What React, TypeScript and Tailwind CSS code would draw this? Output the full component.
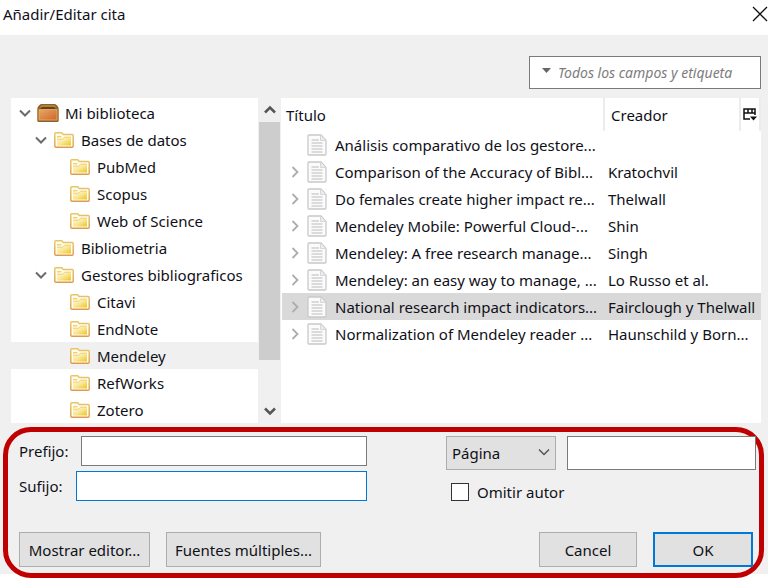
import { useState } from "react";

type Node = { label: string; depth: number; open?: boolean; root?: boolean };

const tree: Node[] = [
  { label: "Mi biblioteca", depth: 0, open: true, root: true },
  { label: "Bases de datos", depth: 1, open: true },
  { label: "PubMed", depth: 2 },
  { label: "Scopus", depth: 2 },
  { label: "Web of Science", depth: 2 },
  { label: "Bibliometria", depth: 1 },
  { label: "Gestores bibliograficos", depth: 1, open: true },
  { label: "Citavi", depth: 2 },
  { label: "EndNote", depth: 2 },
  { label: "Mendeley", depth: 2 },
  { label: "RefWorks", depth: 2 },
  { label: "Zotero", depth: 2 },
];

const items = [
  { title: "Análisis comparativo de los gestore...", creator: "", leaf: true },
  { title: "Comparison of the Accuracy of Bibl...", creator: "Kratochvil" },
  { title: "Do females create higher impact re...", creator: "Thelwall" },
  { title: "Mendeley Mobile: Powerful Cloud-...", creator: "Shin" },
  { title: "Mendeley: A free research manage...", creator: "Singh" },
  { title: "Mendeley: an easy way to manage, ...", creator: "Lo Russo et al." },
  { title: "National research impact indicators...", creator: "Fairclough y Thelwall" },
  { title: "Normalization of Mendeley reader ...", creator: "Haunschild y Born..." },
];

const indents = ["pl-2", "pl-6", "pl-10"];

function Chevron({ className }: { className: string }) {
  return (
    <svg viewBox="0 0 12 12" className={className} fill="none" stroke="currentColor" aria-hidden="true">
      <path d="M1 3.5 6 8.5 11 3.5" />
    </svg>
  );
}

function LibraryIcon() {
  return (
    <svg width="22" height="18" viewBox="0 0 22 18" className="shrink-0" aria-hidden="true">
      <defs>
        <linearGradient id="box" x1="0" y1="0" x2="1" y2="1">
          <stop offset="0" stopColor="#e9a863" />
          <stop offset="1" stopColor="#cd652f" />
        </linearGradient>
      </defs>
      <path d="M4 0h14q3.500 2 3.700 5v11.500q0 1.500-1.500 1.500H1.800Q.3 18 .3 16.500V5Q.5 2 4 0Z" fill="#8f602a" />
      <path d="M4.500 1h13l2 3h-17Z" fill="#b07f3f" />
      <path d="M5 3h12l2 2H3Z" fill="#684016" />
      <rect x="2" y="5.600" width="18" height="10.400" fill="url(#box)" stroke="#eeb16d" strokeWidth=".8" />
    </svg>
  );
}

function FolderIcon() {
  return (
    <svg width="20" height="16" viewBox="0 0 20 16" className="shrink-0" aria-hidden="true">
      <defs>
        <linearGradient id="folder" x1="0" y1="0" x2="1" y2="1">
          <stop offset="0" stopColor="#fffbe2" />
          <stop offset=".5" stopColor="#f8e795" />
          <stop offset="1" stopColor="#edc51f" />
        </linearGradient>
        <linearGradient id="edge" x1="0" y1="0" x2="0" y2="1">
          <stop offset="0" stopColor="#e8c668" />
          <stop offset="1" stopColor="#df9a4c" />
        </linearGradient>
      </defs>
      <path d="M.8 14V1.800Q.8.8 1.800.8h6l1.400 1.700h9q1 0 1 1V14q0 1.200-1 1.200H1.800Q.8 15.200.8 14Z" fill="#fffdf0" stroke="url(#edge)" strokeWidth="1.400" />
      <path d="M3 13.500V7.500h5.500l2-2H17v8Z" fill="url(#folder)" />
      <path d="M3 4h4.500v1.500H3Z" fill="#f0d46e" />
      <path d="M3 7.200h5.500l2-2H17" fill="none" stroke="#efcc69" />
    </svg>
  );
}

function PageIcon() {
  return (
    <svg width="20" height="22" viewBox="0 0 20 22" className="shrink-0" aria-hidden="true">
      <path d="M2 1h12l5 5.500V20q0 1-1 1H2q-1 0-1-1V2q0-1 1-1Z" fill="#fbfbfb" stroke="#c9c9c9" strokeWidth="1.300" />
      <path d="M13.500 1.200v5.300h5.200" fill="#ededed" stroke="#d6d6d6" />
      <path d="M4.500 6H12M4.500 9H15.500M4.500 12H15.500M4.500 15H15.500M4.500 18H15.500" stroke="#bcbcbc" strokeWidth="1.100" />
    </svg>
  );
}

export default function App() {
  const [omit, setOmit] = useState(false);
  return (
    <div className="bg-white font-['Noto_Sans','Open_Sans',sans-serif] text-[15px] leading-5 text-[#101018]">
      <header className="flex h-[35px] items-start justify-between pt-1 pl-[3px]">
        <h1>Añadir/Editar cita</h1>
        <button type="button" aria-label="Cerrar" className="flex h-5 w-4 items-center">
          <svg width="16" height="16" viewBox="0 0 16 16" stroke="#111" strokeWidth="1.300" aria-hidden="true">
            <path d="m1 1 14 14M15 1 1 15" />
          </svg>
        </button>
      </header>

      <main className="bg-[#f0f0f0] pt-[21px]">
        <div className="flex justify-end pr-[7px]">
          <div className="flex h-[33px] w-[232px] items-center border border-[#7a7a7a] bg-white pl-3">
            <button type="button" aria-label="Ámbito de búsqueda" className="w-4 shrink-0 pb-1">
              <svg width="9" height="5" viewBox="0 0 9 5" fill="#666" aria-hidden="true">
                <path d="M0 0h9L4.500 5Z" />
              </svg>
            </button>
            <input
              type="text"
              aria-label="Buscar"
              placeholder="Todos los campos y etiqueta"
              className="h-full min-w-0 flex-1 text-sm italic outline-none placeholder:text-[#7d7d7d]"
            />
            <span className="w-5 shrink-0" />
          </div>
        </div>

        <div className="mt-[9px] flex pr-[7px] pl-[11px]">
          <ul role="tree" aria-label="Colecciones" className="w-[247px] shrink-0 bg-white pt-px">
            {tree.map((n) => (
              <li
                key={n.label}
                role="treeitem"
                aria-selected={n.label === "Mendeley"}
                className={`flex h-[27px] items-center ${indents[n.depth]} ${n.label === "Mendeley" ? "bg-[#f0f0f0]" : ""}`}
              >
                <span className="flex w-[18px] shrink-0 items-center">
                  {n.open && (
                    <button type="button" aria-label={`Contraer ${n.label}`}>
                      <Chevron className="size-3 stroke-2 text-[#6b6b6b]" />
                    </button>
                  )}
                </span>
                {n.root ? <LibraryIcon /> : <span className="flex px-px"><FolderIcon /></span>}
                <span className="ml-1.5 whitespace-nowrap">{n.label}</span>
              </li>
            ))}
          </ul>
          <div className="mr-px ml-px flex w-[21px] shrink-0 flex-col bg-[#f0f0f0]">
            <button type="button" aria-label="Desplazar arriba" className="flex h-6 items-center justify-center">
              <Chevron className="size-3 rotate-180 stroke-[2.5] text-[#555]" />
            </button>
            <div className="flex-1">
              <div className="h-[86%] bg-[#cdcdcd]" />
            </div>
            <button type="button" aria-label="Desplazar abajo" className="flex h-6 items-center justify-center">
              <Chevron className="size-3 stroke-[2.5] text-[#555]" />
            </button>
          </div>
          <div className="min-w-0 flex-1 bg-white pl-px">
            <table className="w-full table-fixed border-separate border-spacing-0 text-left">
              <colgroup>
                <col />
                <col className="w-[136px]" />
                <col className="w-[22px]" />
              </colgroup>
              <thead>
                <tr className="h-[33px]">
                  <th className="p-0 pl-1 font-normal">Título</th>
                  <th className="border-l-2 border-[#ececec] p-0 pl-1.5 font-normal">Creador</th>
                  <th className="border-x-2 border-[#ececec] p-0">
                    <button type="button" aria-label="Elegir columnas" className="mx-auto block">
                      <svg width="14" height="13" viewBox="0 0 14 13" fill="none" stroke="#111" strokeWidth="1.500" aria-hidden="true">
                        <path d="M12 7V1H1v10h6M1 5h11M5 1v4M9 1v4" />
                        <path d="M7 8.500h7L10.500 12.500Z" fill="#111" stroke="none" />
                      </svg>
                    </button>
                  </th>
                </tr>
              </thead>
              <tbody>
                {items.map((it, i) => (
                  <tr key={it.title} className={i === 6 ? "bg-[#d9d9d9]" : ""}>
                    <td className="h-[27px] p-0">
                      <div className="flex items-center pl-[7px]">
                        <span className="flex w-[18px] shrink-0">
                          {!it.leaf && (
                            <button type="button" aria-label="Expandir">
                              <Chevron className="size-3 -rotate-90 stroke-[1.8] text-[#adadad]" />
                            </button>
                          )}
                        </span>
                        <PageIcon />
                        <span className="ml-2 whitespace-nowrap">{it.title}</span>
                      </div>
                    </td>
                    <td colSpan={2} className="p-0 pl-[5px] whitespace-nowrap">{it.creator}</td>
                  </tr>
                ))}
              </tbody>
            </table>
          </div>
        </div>

        <div className="bg-[linear-gradient(to_top,white_4px,#f0f0f0_4px)] pt-1">
          <form
            onSubmit={(e) => e.preventDefault()}
            className="mr-1 ml-[3px] rounded-[28px] border-5 border-[#c00000] px-[11px] pt-1 pb-1.5"
          >
            <div className="-mr-2 flex justify-between gap-4">
              <div className="flex w-[348px] flex-col gap-[5px]">
                <div className="flex h-[30px] items-center">
                  <label htmlFor="prefix" className="w-[62px] shrink-0">Prefijo:</label>
                  <input id="prefix" type="text" className="h-full min-w-0 flex-1 border border-[#7a7a7a] bg-white px-1 outline-none" />
                </div>
                <div className="flex h-[30px] items-center">
                  <label htmlFor="suffix" className="w-[57px] shrink-0">Sufijo:</label>
                  <input id="suffix" type="text" className="h-full min-w-0 flex-1 border border-[#0078d7] bg-white px-1 outline-none" />
                </div>
              </div>
              <div className="w-[310px]">
                <div className="flex h-[34px] gap-[11px]">
                  <div className="relative w-[110px] shrink-0">
                    <select
                      aria-label="Tipo de localizador"
                      className="h-full w-full appearance-none border border-[#adadad] bg-[#e1e1e1] pl-[5px] outline-none"
                    >
                      <option>Página</option>
                    </select>
                    <Chevron className="pointer-events-none absolute top-2.5 right-1.5 size-3 stroke-[1.5] text-[#555]" />
                  </div>
                  <input type="text" aria-label="Localizador" className="min-w-0 flex-1 border border-[#7a7a7a] bg-white px-1 outline-none" />
                </div>
                <label className="mt-3 flex items-center gap-2 pl-[5px]">
                  <input
                    type="checkbox"
                    checked={omit}
                    onChange={() => setOmit(!omit)}
                    className="size-[18px] appearance-none border border-[#333] bg-white checked:bg-[#0078d7]"
                  />
                  Omitir autor
                </label>
              </div>
            </div>
            <div className="-mr-[5px] mt-[30px] flex h-[35px] gap-4">
              <button type="button" className="w-[131px] border border-[#adadad] bg-[#e1e1e1] whitespace-nowrap">Mostrar editor...</button>
              <button type="button" className="w-[155px] border border-[#adadad] bg-[#e1e1e1] whitespace-nowrap">Fuentes múltiples...</button>
              <button type="button" className="ml-auto w-[98px] border border-[#adadad] bg-[#e1e1e1]">Cancel</button>
              <button type="submit" className="w-[100px] border-2 border-[#0078d7] bg-[#e1e1e1]">OK</button>
            </div>
          </form>
        </div>
      </main>
    </div>
  );
}
